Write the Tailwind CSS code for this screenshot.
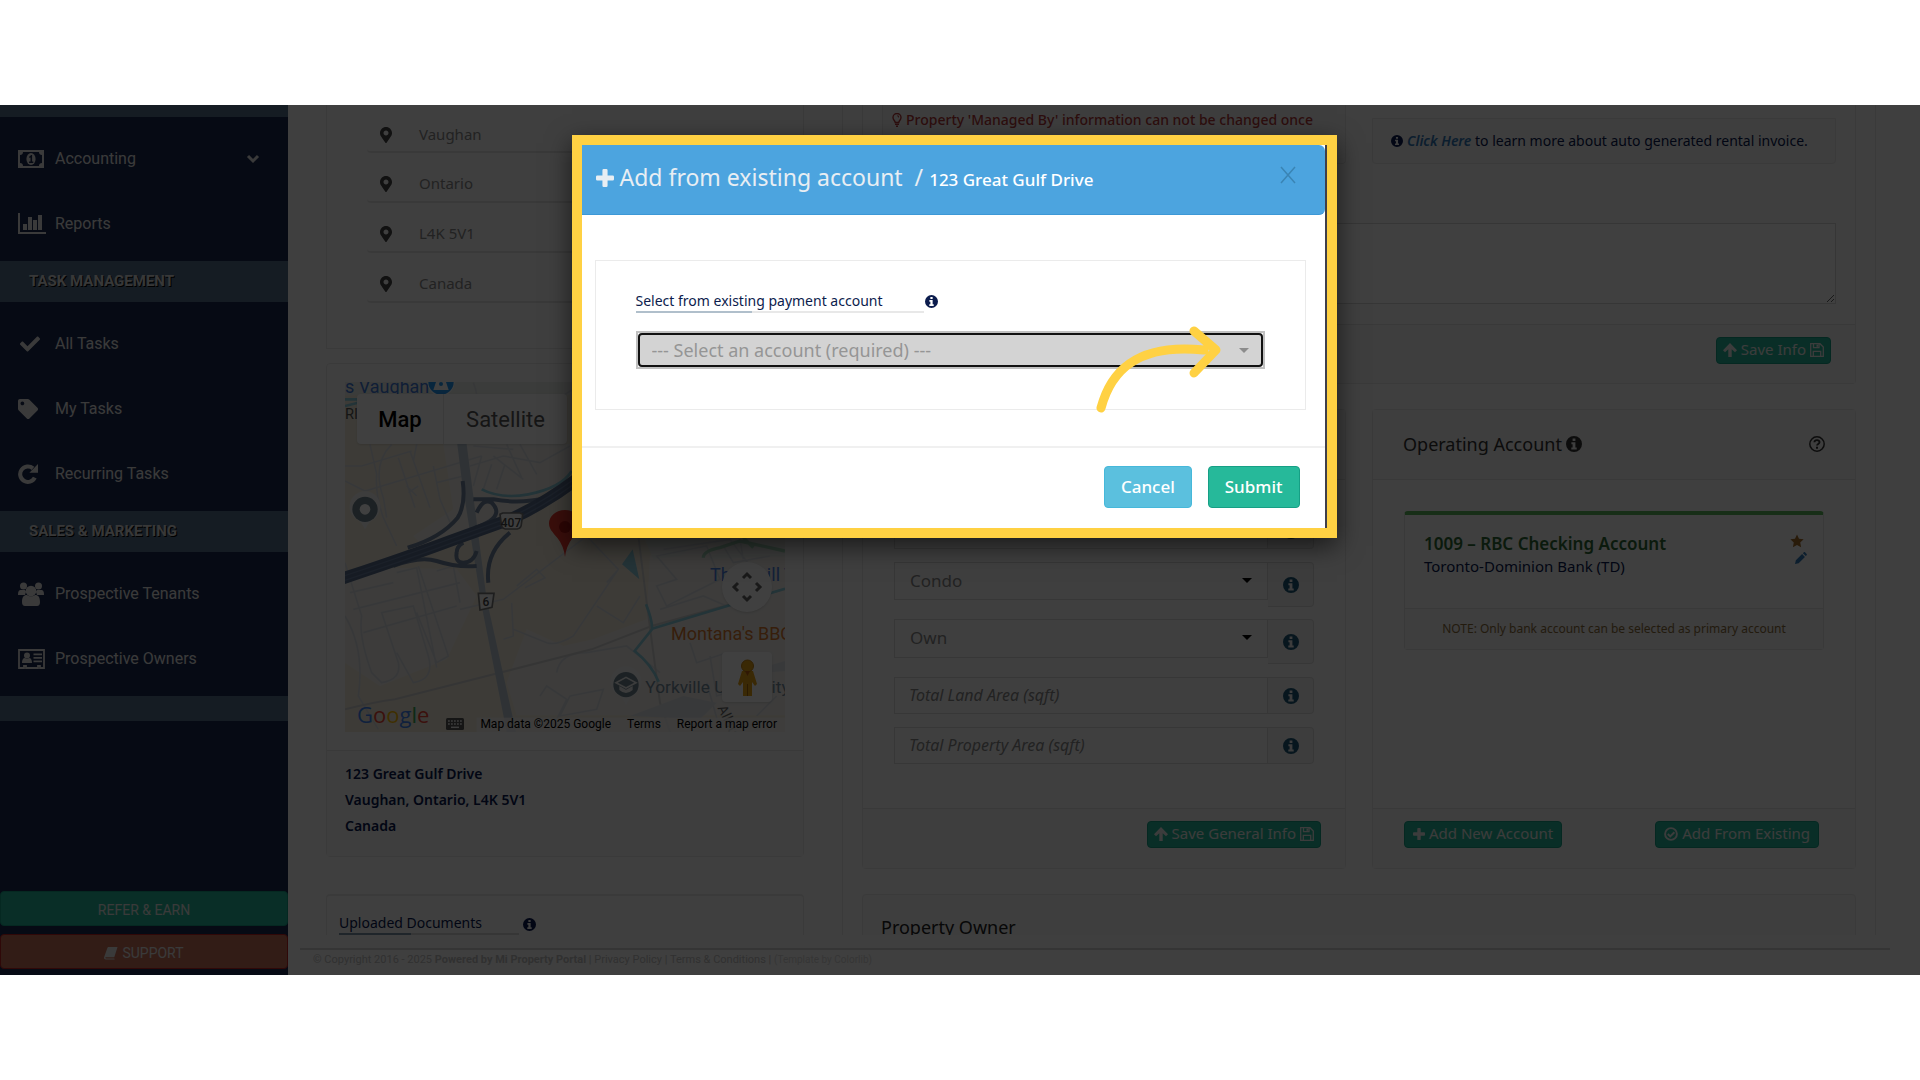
<!DOCTYPE html>
<html lang="en">
<head>
    <meta charset="UTF-8">
    <meta name="viewport" content="width=device-width, initial-scale=1.0">
    <title>Add from existing account</title>
    <script src="https://cdn.jsdelivr.net/npm/@tailwindcss/browser@4"></script>
</head>
<body class="bg-white font-['Noto_Sans',sans-serif] text-sm">

    <!-- icons -->
    <svg class="hidden">
        <symbol id="i-info" viewBox="0 0 16 16"><path fill-rule="evenodd" d="M8 0a8 8 0 1 0 0 16A8 8 0 0 0 8 0zM6.600 2.600h2.800v2.300H6.600zM5.400 6.200h4v5.200h1.300v2H5.300v-2h1.300V8.200H5.400z"/></symbol>
        <symbol id="i-pin" viewBox="0 0 384 512"><path d="M172.268 501.67C26.97 291.031 0 269.413 0 192 0 85.961 85.961 0 192 0s192 85.961 192 192c0 77.413-26.97 99.031-172.268 309.67-9.535 13.774-29.93 13.773-39.464 0zM192 272c44.183 0 80-35.817 80-80s-35.817-80-80-80-80 35.817-80 80 35.817 80 80 80z"/></symbol>
        <symbol id="i-check" viewBox="0 0 512 512"><path d="M173.898 439.404l-166.4-166.4c-9.997-9.997-9.997-26.206 0-36.204l36.203-36.204c9.997-9.998 26.207-9.998 36.204 0L192 312.69 432.095 72.596c9.997-9.997 26.207-9.997 36.204 0l36.203 36.204c9.997 9.997 9.997 26.206 0 36.204l-294.4 294.401c-9.998 9.997-26.207 9.997-36.204-.001z"/></symbol>
        <symbol id="i-tag" viewBox="0 0 512 512"><path d="M0 252.118V48C0 21.49 21.49 0 48 0h204.118a48 48 0 0 1 33.941 14.059l211.882 211.882c18.745 18.745 18.745 49.137 0 67.882L293.823 497.941c-18.745 18.745-49.137 18.745-67.882 0L14.059 286.059A48 48 0 0 1 0 252.118zM112 64c-26.51 0-48 21.49-48 48s21.49 48 48 48 48-21.49 48-48-21.49-48-48-48z"/></symbol>
        <symbol id="i-money" viewBox="0 0 26 18"><path fill-rule="evenodd" d="M0 0h26v18H0zM5 2a3 3 0 0 1-3 3v8a3 3 0 0 1 3 3h16a3 3 0 0 1 3-3V5a3 3 0 0 1-3-3z"/><ellipse cx="13" cy="9" rx="4.600" ry="6"/><path d="M11.300 6.600l2-1.600h.8v6.600h1.200v1.400h-4.200v-1.400h1.400V7.400l-1.200.6z" fill="#18284f"/></symbol>
        <symbol id="i-chart" viewBox="0 0 28 21"><path d="M0 0h2v19h26v2H0zM5 11h4v6H5zM10 4h4v13h-4zM15 7h4v10h-4zM20 2h4v15h-4z"/></symbol>
        <symbol id="i-redo" viewBox="0 0 22 22"><path d="M18.500 15A8.500 8.500 0 1 1 16.500 4.800" fill="none" stroke="currentColor" stroke-width="4.500"/><path d="M22 0v9.500h-9.500z"/></symbol>
        <symbol id="i-users" viewBox="0 0 26 24"><circle cx="5.500" cy="4" r="3.500"/><circle cx="20.500" cy="4" r="3.500"/><path d="M0 13c0-4 1-5 3-5h3c1 0 2 .5 2 2l-1 3zM26 13c0-4-1-5-3-5h-3c-1 0-2 .5-2 2l1 3z"/><circle cx="13" cy="9" r="5.300"/><path d="M4 20c0-4.500 1.500-7 5-7 2 1.800 6 1.800 8 0 3.500 0 5 2.500 5 7 0 2.500-1 4-3 4H7c-2 0-3-1.500-3-4z"/></symbol>
        <symbol id="i-card" viewBox="0 0 27 20"><path d="M1 1h25v18h-4v-2h-2v2H8v-2H6v2H1z" fill="none" stroke="currentColor" stroke-width="1.800"/><circle cx="9" cy="6.500" r="3"/><path d="M4 14c0-3 .8-5 3-5 1.200 1 2.800 1 4 0 2.200 0 3 2 3 5zM15.500 4.500H24v1.700h-8.500zM15.500 8H24v1.700h-8.500zM15.500 11.500H24v1.700h-8.500z"/></symbol>
        <symbol id="i-up" viewBox="0 0 14 14"><path d="M7 0l7 7.200-2 2L8.700 6.200V14H5.300V6.200L2 9.200l-2-2z"/></symbol>
        <symbol id="i-save" viewBox="0 0 14 14"><path d="M.7.700h9.300l3.300 3.300v9.300H.7zM3.500 1v3.700h5.500V1M3.300 13V8.300h7.400V13" fill="none" stroke="currentColor" stroke-width="1.300"/><path d="M6.500 1.500h1.600v2.300H6.500z"/></symbol>
        <symbol id="i-plus" viewBox="0 0 14 14"><path d="M5 1q0-1 1-1h2q1 0 1 1v4h4q1 0 1 1v2q0 1-1 1H9v4q0 1-1 1H6q-1 0-1-1V9H1Q0 9 0 8V6q0-1 1-1h4z"/></symbol>
        <symbol id="i-okay" viewBox="0 0 14 14"><circle cx="7" cy="7" r="5.900" fill="none" stroke="currentColor" stroke-width="1.900"/><path d="M3.800 7l2.400 2.400 4.200-4.200" fill="none" stroke="currentColor" stroke-width="2"/></symbol>
        <symbol id="i-question" viewBox="0 0 16 16"><circle cx="8" cy="8" r="7.200" fill="none" stroke="currentColor" stroke-width="1.500"/><path d="M5.400 6.300C5.600 3.300 10.700 3.400 10.500 6.300c-.1 1.700-2.500 1.700-2.500 3.300" fill="none" stroke="currentColor" stroke-width="1.900"/><path d="M7 10.800h2v1.900H7z"/></symbol>
        <symbol id="i-star" viewBox="0 0 16 16"><path d="M8 .5l2.300 4.900 5.300.7-3.900 3.700 1 5.400L8 12.600l-4.700 2.600 1-5.400L.4 6.100l5.300-.7z"/></symbol>
        <symbol id="i-pencil" viewBox="0 0 14 14"><path d="M0 14l1-4.300L8.300 2.400l3.300 3.300L4.300 13zM9.200 1.500L10.300.4c.4-.4 1-.4 1.400 0l1.900 1.900c.4.400.4 1 0 1.400l-1.100 1.100z"/></symbol>
        <symbol id="i-bulb" viewBox="0 0 10 14"><path d="M3.200 9.500C3.200 7.800 1 7 1 4.500a4 4 0 0 1 8 0C9 7 6.800 7.800 6.800 9.500z" fill="none" stroke="currentColor" stroke-width="1.400"/><path d="M3 10.500h4V12H3zM4 12.500h2V14H4zM5 2.500h.8c.7 0 1.200.5 1.200 1.200v.8h-.8c0-.8-.4-1.200-1.200-1.200z"/></symbol>
        <symbol id="i-book" viewBox="0 0 15 14"><path d="M5 .5h9.500L11 11.500H2c-1 0-.8 1.500.3 1.500H11l.5 1H2C.3 14-.3 12.500.3 11L3.500 2C3.800 1 4.200.5 5 .5z"/></symbol>
    </svg>

    <div class="flex h-screen flex-col py-[105px]">
        <div class="relative flex min-h-0 flex-1 overflow-hidden bg-[#fbfbfb]">

            <!-- sidebar -->
            <nav class="flex w-72 shrink-0 flex-col bg-[#18284f] font-[Roboto,sans-serif] text-base text-[#e7e7e7]">
                <div class="h-3 bg-[#56708a]"></div>
                <div class="flex flex-col pt-[9px] pb-[5px]">
                    <a href="#" class="flex h-[65px] items-center pr-7 pl-[18px]"><span class="w-[37px]"><svg class="h-[18px] w-[26px] fill-current"><use href="#i-money"/></svg></span>Accounting
                        <svg class="ml-auto h-2.5 w-3.5" viewBox="0 0 14 10"><path d="M2 2l5 5 5-5" fill="none" stroke="currentColor" stroke-width="3"/></svg></a>
                    <a href="#" class="flex h-[65px] items-center pl-[18px]"><span class="w-[37px]"><svg class="h-[21px] w-7 fill-current"><use href="#i-chart"/></svg></span>Reports</a>
                </div>
                <h3 class="flex h-[41px] items-center bg-[#56708a] pl-[29px] text-[15px] font-bold text-[#ddd] [text-shadow:1px_1px_#000]">TASK MANAGEMENT</h3>
                <div class="flex flex-col pt-[9px] pb-[5px]">
                    <a href="#" class="flex h-[65px] items-center pl-[18px]"><span class="w-[37px] pl-0.5"><svg class="size-5 fill-current"><use href="#i-check"/></svg></span>All Tasks</a>
                    <a href="#" class="flex h-[65px] items-center pl-[18px]"><span class="w-[37px]"><svg class="size-5 fill-current"><use href="#i-tag"/></svg></span>My Tasks</a>
                    <a href="#" class="flex h-[65px] items-center pl-[18px]"><span class="w-[37px]"><svg class="size-5 fill-current"><use href="#i-redo"/></svg></span>Recurring Tasks</a>
                </div>
                <h3 class="flex h-[41px] items-center bg-[#56708a] pl-[29px] text-[15px] font-bold text-[#ddd] [text-shadow:1px_1px_#000]">SALES &amp; MARKETING</h3>
                <div class="flex flex-col pt-[9px] pb-[5px]">
                    <a href="#" class="flex h-[65px] items-center pl-[18px]"><span class="w-[37px]"><svg class="h-6 w-[26px] fill-current"><use href="#i-users"/></svg></span>Prospective Tenants</a>
                    <a href="#" class="flex h-[65px] items-center pl-[18px]"><span class="w-[37px]"><svg class="h-5 w-[27px] fill-current"><use href="#i-card"/></svg></span>Prospective Owners</a>
                </div>
                <div class="h-[25px] bg-[#56708a]"></div>
                <div class="mt-auto flex flex-col gap-2 pb-1.5 text-sm">
                    <button class="h-[35px] rounded border border-[#169f85] bg-[#26b99a] pt-0.5">REFER &amp; EARN</button>
                    <button class="flex h-[35px] items-center justify-center gap-1 rounded border border-[#b22] bg-[#c5705a] pt-0.5"><svg class="size-3.5 fill-current"><use href="#i-book"/></svg>SUPPORT</button>
                </div>
            </nav>

            <div class="flex min-w-0 flex-1 flex-col">
                <main class="grid min-h-0 flex-1 grid-cols-[478fr_1034fr] gap-[38px] overflow-hidden pr-11 pl-[38px]">

                    <!-- left column -->
                    <div class="flex flex-col">
                        <div class="border border-t-0 border-[#e8e8e8] pb-[45px] pl-10 text-[15px] text-[#888]">
                            <div class="flex h-12 items-center rounded-b border-b-2 border-[#e4e4e4] pt-3.5 pl-[13px]"><svg class="mr-[27px] h-4 w-3 fill-[#444]"><use href="#i-pin"/></svg>Vaughan</div>
                            <div class="flex h-[50px] items-center rounded-b border-b-2 border-[#e4e4e4] pt-3.5 pl-[13px]"><svg class="mr-[27px] h-4 w-3 fill-[#444]"><use href="#i-pin"/></svg>Ontario</div>
                            <div class="flex h-[50px] items-center rounded-b border-b-2 border-[#e4e4e4] pt-3.5 pl-[13px]"><svg class="mr-[27px] h-4 w-3 fill-[#444]"><use href="#i-pin"/></svg>L4K 5V1</div>
                            <div class="flex h-[50px] items-center rounded-b border-b-2 border-[#e4e4e4] pt-3.5 pl-[13px]"><svg class="mr-[27px] h-4 w-3 fill-[#444]"><use href="#i-pin"/></svg>Canada</div>
                        </div>

                        <div class="mt-3.5 rounded border border-[#e8e8e8]">
                            <div class="relative mx-[18px] mt-[18px] mb-[18px] h-[350px] overflow-hidden font-[Roboto,sans-serif]">
                                <svg class="size-full" viewBox="105 98 1320 1050" preserveAspectRatio="xMidYMid slice">
                                    <rect x="105" y="98" width="1320" height="1050" fill="#f3ecdc"/>
                                    <path d="M400 283h390v90L560 520 350 600 310 560 430 480zM105 700L240 655 440 660 500 740 410 930 210 1010 105 940zM650 840l110 50 90-20 160-60 10-190 70-50h335v528H620L590 1000z" fill="#f1efec"/>
                                    <path d="M1000 560h200l-90 60-80 10zM1190 630l120-60 115 20v30zM105 98h320l360 0v40H105z" fill="#ebefe9"/>
                                    <!-- minor streets -->
                                    <g fill="none" stroke="#dcdfe4" stroke-width="5">
                                        <path d="M180 285l20 90q-5 60 20 130l40 85M245 285q-60 60-25 160l10 60M105 350h50l150-45M105 395l60 30 350-105M265 325l50 150M300 305l60 170M370 350l20 100 35 80M380 400l80-20M320 285l-10 50M290 410l30 30M295 430l30-20"/>
                                        <path d="M515 320l-25 90M545 345l-25 75M585 345l-25 75M480 350l100-30 110 20 90-50M590 285l45 100M630 285l50 90M490 290l120 10M550 320l90 70M690 180l100-60M490 100q20 50 0 70"/>
                                        <path d="M105 640l50 160q-10 60 30 170l30 30q60-10 50-60l-50-150 95-20 45 150q20 70-45 80l-50-90M260 670l60-15 60 300M320 790l60 150 35-20-90-270M380 665l50-15 20 110M120 730l130-30M130 780l320-80M160 850l280-80M105 800q60 100 40 240l60 100"/>
                                        <path d="M450 780l130-30 250-190 95 100-135 200q-50 30-80 20l-100-40M605 760l5 100-30 10M620 710l60-50 25 25-60 30M860 770l80 50 50-80M890 700l35-40M740 970q10-60 90-60l120-20 100 80M690 1040l20-30 60 40-40 80M780 1040l100-20-20 60-110 20z"/>
                                        <path d="M1040 620l150-30 40 100-160 80-30-60 60-20zM1060 600l200-30 60 80M1050 780l130-40 70 30M1140 880l20 60 90-30M1200 920l20 120 120-40M1240 590l30 50 110-20M1290 570l10 60M1190 1000l40 140M1340 1100l60-60"/>
                                    </g>
                                    <path d="M105 1080q80-20 150-30l590-150 180-70 400-110M985 560l25 200 40 300 30 88" fill="none" stroke="#d4d3d1" stroke-width="6"/>
                                    <path d="M105 150h40M515 420q60 30 140 15 100-20 130-70M1008 765q20 50 18 75l-52 65q50 40 72 92M1026 838l399-120M105 170l60-15" fill="none" stroke="#8bcddd" stroke-width="8"/>
                                    <path d="M968 600l20 90-52-45z" fill="#90cde0"/>
                                    <path d="M1180 625q0-20 50-30l60-20 135 30M1300 565l30 30" fill="none" stroke="#a7d8ba" stroke-width="10"/>
                                    <path d="M960 1100l160-60 100 20-50 50zM1340 960l85-25v30l-60 5z" fill="#e0e3e7"/>
                                    <!-- arterial road -->
                                    <path d="M440 270h28l62 480 88 398h-28L515 770 455 390z" fill="#bcc8d3"/>
                                    <!-- highway and its ramps -->
                                    <g fill="none" stroke="#71849f" stroke-width="12">
                                        <path d="M458 395q10 70-15 110-50 60-150 90M490 450h60q80 15 160-5M500 490q20-45 45-30 30 30-5 55-25 15-45 20M535 700q-10-90 65-150M250 650q80-30 130-15 60 20 120 15M440 610q-5 30 20 30 30 0 40-35M440 610q0-20 20-30"/>
                                    </g>
                                    <path d="M90 690Q300 620 420 575L600 510Q700 465 800 390" fill="none" stroke="#586d8d" stroke-width="36"/>
                                    <path d="M90 684Q300 614 420 569L600 504Q700 459 800 384M90 698Q300 628 420 583L600 518Q700 473 800 398" fill="none" stroke="#6c81a2" stroke-width="4"/>
                                    <!-- road shields -->
                                    <path d="M570 495l8-4h52l8 4-4 30q0 12-12 14h-36q-12-2-12-14z" fill="#f6f6f6" stroke="#777" stroke-width="5"/>
                                    <text x="603" y="532" text-anchor="middle" font-size="36" font-weight="500" fill="#444">407</text>
                                    <path d="M505 732h47l-6 42-36 8z" fill="#f6f6f6" stroke="#777" stroke-width="5"/>
                                    <text x="528" y="770" text-anchor="middle" font-size="36" font-weight="500" fill="#444">6</text>
                                    <!-- place labels -->
                                    <text x="105" y="130" font-size="54" fill="#3f78d8">s Vaughan</text>
                                    <path d="M352 98h82q0 30-41 50-41-20-41-50z" fill="#fff"/><circle cx="393" cy="98" r="38" fill="#2196f3"/><path d="M378 98h30l8 24h-46z" fill="#fff"/><circle cx="393" cy="104" r="6" fill="#2196f3"/>
                                    <text x="105" y="208" font-size="44" fill="#555">RI</text>
                                    <text x="1200" y="695" font-size="54" fill="#4a7fe0">Thornhill T</text>
                                    <text x="1083" y="872" font-size="54" fill="#d9792f">Montana's BBQ</text>
                                    <text x="1006" y="1032" font-size="52" fill="#768c9c">Yorkville University</text>
                                    <text x="1222" y="1075" font-size="42" fill="#666" transform="rotate(65 1222 1075)">Allstate</text>
                                    <path d="M165 540q-10-22-22-28a46 46 0 1 1 44 0q-12 8-22 28z" fill="#f4f4f4"/><circle cx="165" cy="480" r="38" fill="#70848f"/><circle cx="165" cy="480" r="16" fill="#fff"/>
                                    <path d="M948 1066q-10-22-22-28a46 46 0 1 1 44 0q-12 8-22 28z" fill="#f4f4f4"/><circle cx="948" cy="1006" r="38" fill="#70848f"/><path d="M918 1000l30-16 30 16-30 16z" fill="none" stroke="#eee" stroke-width="5"/><path d="M928 1010v12q20 18 40 0v-12l-20 11z" fill="#eee"/>
                                    <!-- property marker -->
                                    <path d="M765 623q-4-33-22-56c-16-20-26-28-26-45a48 40 0 0 1 96 0c0 17-10 25-26 45q-18 23-22 56z" fill="#e8382e"/><circle cx="765" cy="533" r="18" fill="#b31412"/>
                                    <rect x="500" y="1105" width="925" height="43" fill="#f5f5f5" opacity=".8"/>
                                </svg>
                                <div class="absolute top-3 left-3 flex h-[50px] rounded-sm bg-white text-[22px] shadow">
                                    <button class="w-[87px] border-r border-[#e6e6e6] pt-0.5 font-medium text-black">Map</button>
                                    <button class="w-[123px] pt-0.5 text-[#565656]">Satellite</button>
                                </div>
                                <button aria-label="Camera controls" class="absolute top-[180px] right-[13px] flex size-[50px] items-center justify-center rounded-full bg-white shadow"><svg class="size-8" viewBox="0 0 32 32"><path d="M12 7l4-4 4 4M12 25l4 4 4-4M7 12l-4 4 4 4M25 12l4 4-4 4" fill="none" stroke="#666" stroke-width="3"/></svg></button>
                                <button aria-label="Street View" class="absolute top-[270px] right-[13px] flex size-[50px] items-center justify-center rounded-sm bg-white shadow"><svg class="h-[37px] w-[21px]" viewBox="0 0 21 37"><path d="M5 12h11l4 13-2 2-3-4v14H6V23l-3 4-2-2z" fill="#e8a317"/><circle cx="10.500" cy="7" r="6" fill="#e8a317" stroke="#c08010"/><path d="M8 12l2.500 5 2.500-5z" fill="#c06010"/><path d="M10.500 25v12" stroke="#a86a08"/></svg></button>
                                <div class="absolute bottom-1 left-3 font-['Open_Sans',sans-serif] text-[22px] leading-7"><span class="text-[#4285f4]">G</span><span class="text-[#ea4335]">o</span><span class="text-[#fbbc05]">o</span><span class="text-[#4285f4]">g</span><span class="text-[#34a853]">l</span><span class="text-[#ea4335]">e</span></div>
                                <div class="absolute right-2 bottom-0 flex h-4 items-center gap-4 text-xs text-black">
                                    <svg class="h-3 w-[18px]" viewBox="0 0 18 12"><rect width="18" height="12" rx="1.500" fill="#555"/><path d="M2 3h14M2 6h14" stroke="#eee" stroke-width="1.600" stroke-dasharray="1.800 1.200"/><path d="M5 9.300h8" stroke="#eee" stroke-width="1.500"/></svg>
                                    <span>Map data ©2025 Google</span>
                                    <a href="#">Terms</a>
                                    <a href="#">Report a map error</a>
                                </div>
                            </div>
                            <div class="border-t border-[#e4e4e4] bg-[#f5f5f5] pt-2.5 pb-[17px] pl-[18px] text-sm leading-[26px] font-semibold text-[#081850]">
                                <p>123 Great Gulf Drive</p>
                                <p>Vaughan, Ontario, L4K 5V1</p>
                                <p>Canada</p>
                            </div>
                        </div>

                        <div class="mt-[37px] h-20 rounded border-x border-t-2 border-[#e8e8e8] pt-[17px] pl-3">
                            <div class="flex items-center gap-1 text-sm text-[#081850]">
                                <h4 class="relative w-[180px] border-b-2 border-[#d5d5d5]">Uploaded Documents<span class="absolute -bottom-0.5 left-0 h-0.5 w-[72px] bg-[#7d93a8]"></span></h4>
                                <svg class="size-[13px] fill-current"><use href="#i-info"/></svg>
                            </div>
                        </div>
                    </div>

                    <!-- right column -->
                    <div class="flex flex-col border-x border-[#e6e6e6] px-[19px]">
                        <div class="rounded-b border border-t-0 border-[#e6e6e6]">
                            <div class="grid grid-cols-2 gap-[26px] px-[19px]">
                                <div class="flex h-[59px] justify-end rounded-b border border-t-0 border-[#e6e6e6] bg-[#f7f7f7] pt-[5px] pr-8 text-sm font-medium text-[#b53a3a]"><p class="flex h-5 items-center gap-1 whitespace-nowrap"><svg class="h-3.5 w-2.5 fill-current"><use href="#i-bulb"/></svg>Property 'Managed By' information can not be changed once</p></div>
                                <div class="mt-[13px] flex h-[46px] items-center gap-1 rounded-b border border-[#e6e6e6] bg-[#f7f7f7] pl-[18px] text-sm whitespace-nowrap text-[#081850]"><svg class="size-3 fill-current"><use href="#i-info"/></svg><p><a href="#" class="font-semibold text-[#337ab7] italic">Click Here</a> to learn more about auto generated rental invoice.</p></div>
                            </div>
                            <div class="flex px-[19px] pt-[59px] pb-5"><textarea aria-label="Notes" class="h-[81px] w-full border border-[#d8d8d8] bg-[#fdfdfd]"></textarea></div>
                            <div class="flex h-[59px] justify-end border-t border-[#e4e4e4] bg-[#f5f5f5] pt-3 pr-6">
                                <button class="flex h-[27px] items-center gap-1 rounded border border-[#169f85] bg-[#26b99a] px-1.5 pb-0.5 text-[15px] text-[#eee]"><svg class="size-3.5 fill-current"><use href="#i-up"/></svg>Save Info<svg class="size-3.5 fill-current"><use href="#i-save"/></svg></button>
                            </div>
                        </div>

                        <div class="mt-[25px] grid grid-cols-2 gap-[26px]">
                            <form class="flex flex-col rounded border border-[#e6e6e6] text-[#888]">
                                <div class="h-[70px] border-b border-[#e4e4e4] bg-[#f5f5f5]"></div>
                                <div class="flex flex-col px-[31px] pt-8 pb-11">
                                    <div class="flex h-[37px]">
                                        <input aria-label="Property type" class="min-w-0 flex-1 border border-[#dcdcdc]">
                                        <span class="flex w-[46px] items-center justify-center rounded-r border border-l-0 border-[#dcdcdc] bg-[#f2f2f2]"><svg class="size-4 fill-[#1f5878]"><use href="#i-info"/></svg></span>
                                    </div>
                                    <div class="relative mt-[13px] flex h-[45px] items-start">
                                        <select aria-label="Unit type" class="h-[38px] min-w-0 flex-1 appearance-none border border-[#dcdcdc] px-[15px] text-[17px]"><option>Condo</option></select>
                                        <svg class="absolute top-4 right-[62px] h-[5px] w-2.5" viewBox="0 0 10 5"><path d="M0 0h10L5 5z"/></svg>
                                        <span class="flex h-[45px] w-[46px] items-center justify-center rounded-r border border-l-0 border-[#dcdcdc] bg-[#f2f2f2]"><svg class="size-4 fill-[#1f5878]"><use href="#i-info"/></svg></span>
                                    </div>
                                    <div class="relative mt-3 flex h-[46px] items-start">
                                        <select aria-label="Ownership" class="h-[39px] min-w-0 flex-1 appearance-none border border-[#dcdcdc] px-[15px] text-[17px]"><option>Own</option></select>
                                        <svg class="absolute top-4 right-[62px] h-[5px] w-2.5" viewBox="0 0 10 5"><path d="M0 0h10L5 5z"/></svg>
                                        <span class="flex h-[45px] w-[46px] items-center justify-center rounded-r border border-l-0 border-[#dcdcdc] bg-[#f2f2f2]"><svg class="size-4 fill-[#1f5878]"><use href="#i-info"/></svg></span>
                                    </div>
                                    <div class="mt-3 flex h-[37px]">
                                        <input aria-label="Total Land Area" placeholder="Total Land Area (sqft)" class="min-w-0 flex-1 border border-[#dcdcdc] px-3.5 pb-0.5 text-base placeholder:text-[#888] placeholder:italic">
                                        <span class="flex w-[46px] items-center justify-center rounded-r border border-l-0 border-[#dcdcdc] bg-[#f2f2f2]"><svg class="size-4 fill-[#1f5878]"><use href="#i-info"/></svg></span>
                                    </div>
                                    <div class="mt-[13px] flex h-[37px]">
                                        <input aria-label="Total Property Area" placeholder="Total Property Area (sqft)" class="min-w-0 flex-1 border border-[#dcdcdc] px-3.5 pb-0.5 text-base placeholder:text-[#888] placeholder:italic">
                                        <span class="flex w-[46px] items-center justify-center rounded-r border border-l-0 border-[#dcdcdc] bg-[#f2f2f2]"><svg class="size-4 fill-[#1f5878]"><use href="#i-info"/></svg></span>
                                    </div>
                                </div>
                                <div class="flex h-[60px] justify-end border-t border-[#e4e4e4] bg-[#f5f5f5] pt-3 pr-6">
                                    <button type="button" class="flex h-[27px] items-center gap-1 rounded border border-[#169f85] bg-[#26b99a] px-1.5 pb-0.5 text-[15px] text-[#eee]"><svg class="size-3.5 fill-current"><use href="#i-up"/></svg>Save General Info<svg class="size-3.5 fill-current"><use href="#i-save"/></svg></button>
                                </div>
                            </form>

                            <section class="flex flex-col rounded border border-[#e6e6e6]">
                                <div class="flex h-[70px] items-center gap-1 border-b border-[#e4e4e4] bg-[#f5f5f5] px-[30px] pb-0.5 text-lg text-[#333]">
                                    <h2>Operating Account</h2>
                                    <svg class="size-4 fill-current"><use href="#i-info"/></svg>
                                    <svg class="ml-auto size-4 fill-current"><use href="#i-question"/></svg>
                                </div>
                                <div class="flex-1 px-[31px] pt-[31px]">
                                    <div class="rounded border border-t-4 border-[#e2e2e2] border-t-[#5cb85c]">
                                        <div class="flex h-[93px] justify-between pt-[17px] pr-4 pl-[19px]">
                                            <div>
                                                <h3 class="text-[17px] leading-6 font-semibold text-[#2f6a35]">1009 – RBC Checking Account</h3>
                                                <p class="text-[15px] leading-5 text-[#081850]">Toronto-Dominion Bank (TD)</p>
                                            </div>
                                            <div class="flex flex-col items-end gap-1 pt-0.5">
                                                <svg class="mr-[3px] size-3.5 fill-[#a56c28]"><use href="#i-star"/></svg>
                                                <svg class="size-3 fill-[#337ab7]"><use href="#i-pencil"/></svg>
                                            </div>
                                        </div>
                                        <p class="flex h-[41px] items-center justify-center border-t border-[#e2e2e2] bg-[#f5f5f5] text-xs text-[#8a6d3b]">NOTE: Only bank account can be selected as primary account</p>
                                    </div>
                                </div>
                                <div class="flex h-[60px] items-start justify-between border-t border-[#e4e4e4] bg-[#f5f5f5] pt-3 pr-9 pl-[31px]">
                                    <button class="flex h-[27px] items-center gap-1 rounded border border-[#169f85] bg-[#26b99a] px-2 pb-0.5 text-[15px] text-[#eee]"><svg class="size-3 fill-current"><use href="#i-plus"/></svg>Add New Account</button>
                                    <button class="flex h-[27px] items-center gap-1 rounded border border-[#169f85] bg-[#26b99a] px-2 pb-0.5 text-[15px] text-[#eee]"><svg class="size-3.5 fill-current"><use href="#i-okay"/></svg>Add From Existing</button>
                                </div>
                            </section>
                        </div>

                        <section class="mt-[25px] h-20 rounded border border-[#e6e6e6] bg-[#f5f5f5] pt-5 pl-[18px] text-lg leading-6 text-[#222]"><h2>Property Owner</h2></section>
                    </div>
                </main>

                <footer class="mt-[13px] mr-[30px] ml-3 h-[27px] border-t-2 border-[#d4d4d4] pl-[13px] font-[Roboto,sans-serif] text-[11px] leading-5 text-[#c0c0c0]">
                    © Copyright 2016 - 2025 <b>Powered by Mi Property Portal</b> | <a href="#">Privacy Policy</a> | <a href="#">Terms &amp; Conditions</a> | <span class="text-[10px] text-[#d4d4d4]">(Template by Colorlib)</span>
                </footer>
            </div>

            <!-- backdrop and dialog -->
            <div class="absolute inset-0 flex items-start justify-center bg-black/75 pt-[30px] pr-3">
                <div role="dialog" aria-labelledby="dialogTitle" class="relative w-[765px] border-10 border-[#ffd143] bg-[#3f3f4a] pr-0.5 shadow-[0_8px_24px_rgba(0,0,0,0.6)]">
                    <div class="bg-white">
                        <div class="flex h-[70px] rounded-r-md border-b border-[#3d98d6] bg-[#4ca4df] pr-7 pl-3.5">
                            <h1 id="dialogTitle" class="flex items-center pb-1 text-[23px] text-[#e8eef3]"><svg class="mr-1.5 size-[18px] fill-current"><use href="#i-plus"/></svg>Add from existing account&nbsp; /&nbsp; <span class="pt-1.5 text-[17px] font-medium text-white">123 Great Gulf Drive</span></h1>
                            <button aria-label="Close" class="mt-[21px] ml-auto size-[18px]"><svg class="size-full" viewBox="0 0 18 18"><path d="M2 1l14 16M16 1L2 17" stroke="#3a84b4" stroke-width="1.500"/></svg></button>
                        </div>
                        <div class="px-[13px] pt-[45px] pr-[19px] pb-9">
                            <div class="h-[150px] border border-[#ebebeb] px-10 pt-[29px]">
                                <div class="flex items-center gap-px text-[#0c1c4d]">
                                    <label for="account" class="relative w-[288px] border-b-2 border-[#e8e8e8] leading-[21px]">Select from existing payment account<span class="absolute -bottom-0.5 left-0 h-0.5 w-[116px] bg-[#b0bfcb]"></span></label>
                                    <svg class="size-[13px] fill-current"><use href="#i-info"/></svg>
                                </div>
                                <div class="relative mt-[18px] border-2 border-[#c0c0c0]">
                                    <select id="account" class="block h-[34px] w-full appearance-none rounded-sm border-2 border-[#111] bg-[#d3d3d3] px-3 text-[18px] leading-7 text-[#959595]"><option>--- Select an account (required) ---</option></select>
                                    <svg class="absolute top-[15px] right-3.5 h-[5px] w-2.5" viewBox="0 0 10 5"><path d="M0 0h10L5 5z" fill="#8c8c8c"/></svg>
                                </div>
                            </div>
                        </div>
                        <div class="flex h-[82px] items-center justify-end gap-4 border-t-2 border-[#f0f0f0] pr-[25px] pb-0.5 text-[17px] font-medium text-white">
                            <button class="h-[42px] rounded border border-[#46b8da] bg-[#5bc0de] px-4">Cancel</button>
                            <button class="h-[42px] rounded border border-[#169f85] bg-[#26b99a] px-4">Submit</button>
                        </div>
                    </div>
                    <!-- hand-drawn pointer -->
                    <svg class="pointer-events-none absolute top-[175px] left-[510px] h-[100px] w-[130px]" viewBox="0 0 130 100" fill="none" stroke="#ffd143" stroke-width="9" stroke-linecap="round" stroke-linejoin="round"><path d="M9 88C19 50 46 23 112 30M102 11l22 19-22 23" /></svg>
                </div>
            </div>
        </div>
    </div>
</body>
</html>
